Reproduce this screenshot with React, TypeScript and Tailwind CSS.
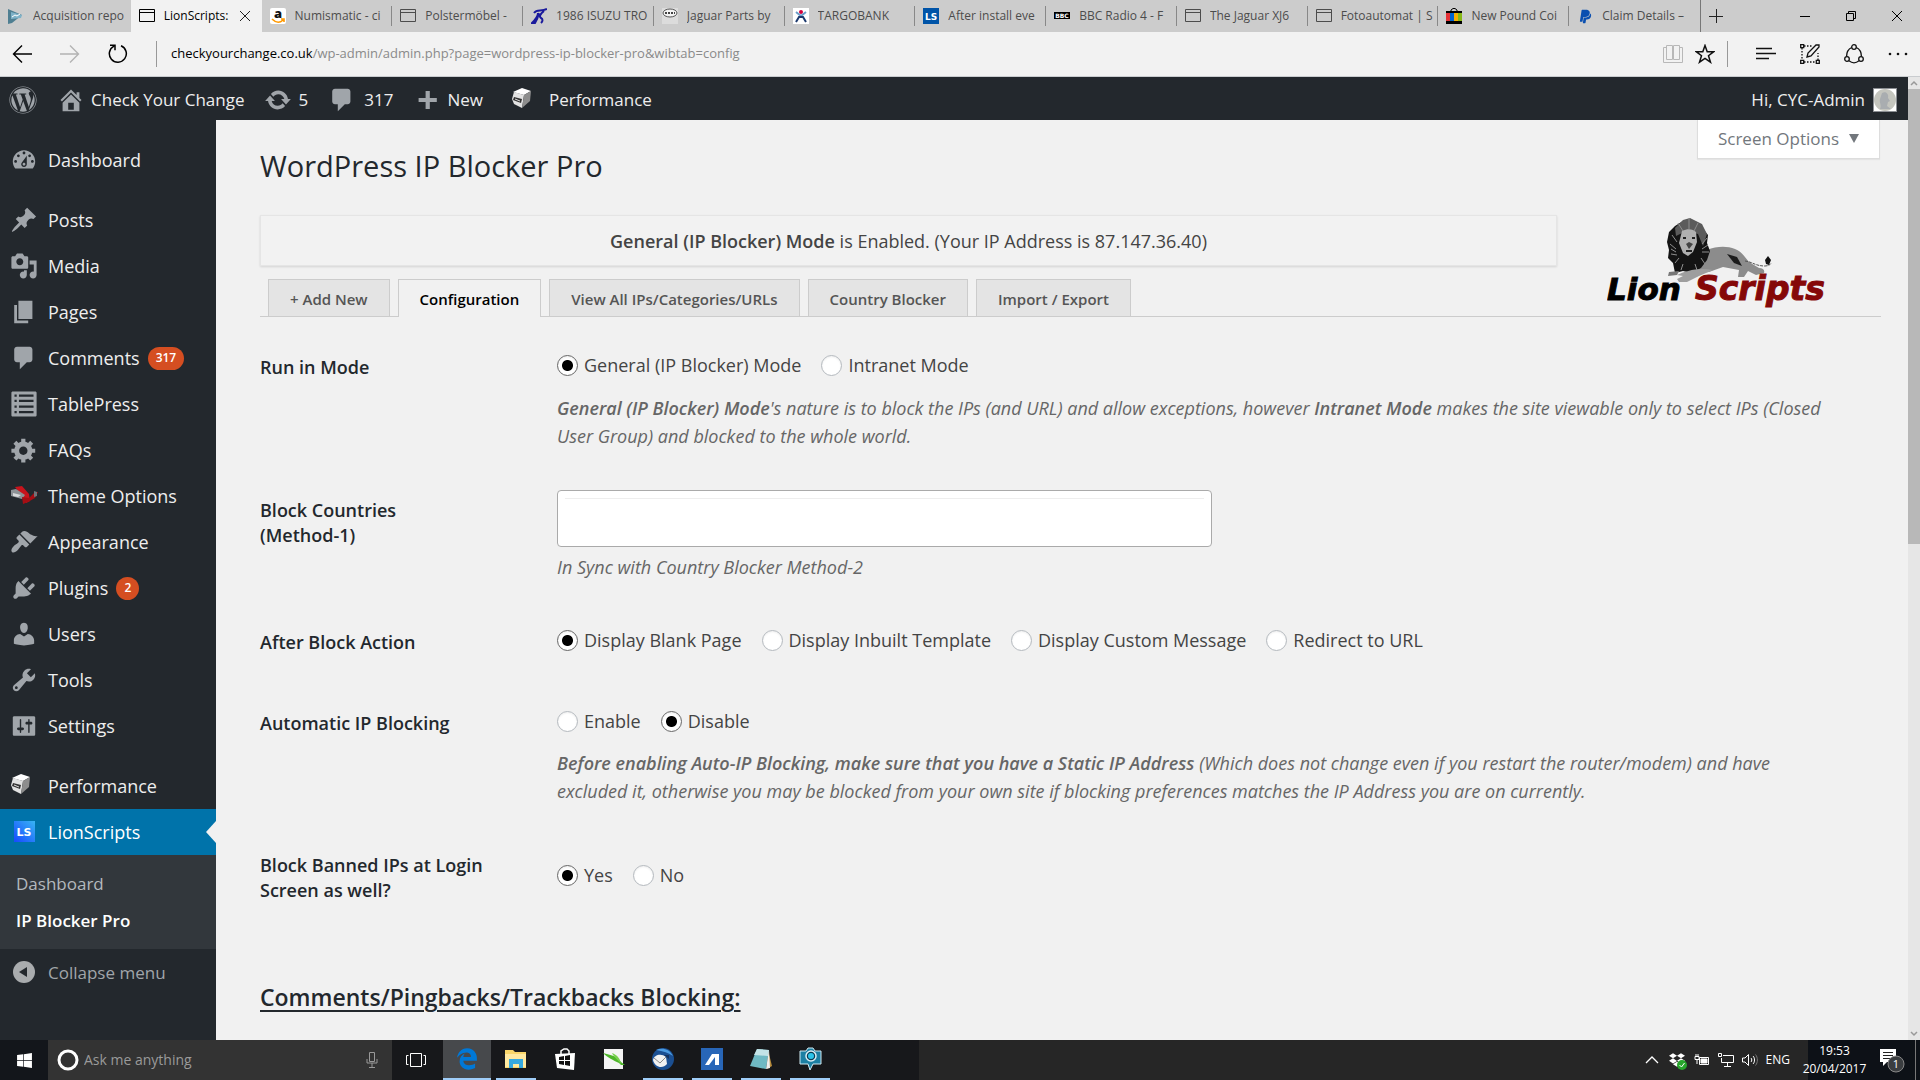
import React from "react";
import { FaWordpress, FaEdgeLegacy, FaWindows, FaPaypal, FaDropbox } from "react-icons/fa";

/* ---------- Icons ---------- */

const glyphs = {
  dashboard:
    "M3.76 16h12.48c1.1-1.37 1.76-3.11 1.76-5 0-4.42-3.58-8-8-8s-8 3.58-8 8c0 1.89.66 3.63 1.76 5zM10 4c.55 0 1 .45 1 1s-.45 1-1 1-1-.45-1-1 .45-1 1-1zM6 6c.55 0 1 .45 1 1s-.45 1-1 1-1-.45-1-1 .45-1 1-1zm8 0c.55 0 1 .45 1 1s-.45 1-1 1-1-.45-1-1 .45-1 1-1zm-5.37 5.55L12 7v6c0 1.1-.9 2-2 2s-2-.9-2-2c0-.57.24-1.08.63-1.45zM4 10c.55 0 1 .45 1 1s-.45 1-1 1-1-.45-1-1 .45-1 1-1zm12 0c.55 0 1 .45 1 1s-.45 1-1 1-1-.45-1-1 .45-1 1-1zm-5 3c0-.55-.45-1-1-1s-1 .45-1 1 .45 1 1 1 1-.45 1-1z",
  post: "M10.44 3.02l1.82-1.82 6.36 6.35-1.83 1.82c-1.05-.68-2.48-.57-3.41.36l-.75.75c-.92.93-1.04 2.35-.35 3.41l-1.83 1.82-2.41-2.41-2.8 2.79c-.42.42-3.38 2.71-3.8 2.29s1.86-3.39 2.28-3.81l2.79-2.79L4.1 9.36l1.83-1.82c1.05.69 2.48.57 3.4-.36l.75-.75c.93-.92 1.05-2.35.36-3.41z",
  media:
    "M13 11V4c0-.55-.45-1-1-1h-1.67L9 1H5L3.67 3H2c-.55 0-1 .45-1 1v7c0 .55.45 1 1 1h10c.55 0 1-.45 1-1zM7 4.5c1.38 0 2.5 1.12 2.5 2.5S8.38 9.5 7 9.5 4.5 8.38 4.5 7 5.62 4.5 7 4.5zM14 6h5v10.5c0 1.38-1.12 2.5-2.5 2.5S14 17.88 14 16.5s1.12-2.5 2.5-2.5c.17 0 .34.02.5.05V9h-3V6zm-4 8.05V13h2v3.5c0 1.38-1.12 2.5-2.5 2.5S7 17.88 7 16.5 8.12 14 9.5 14c.17 0 .34.02.5.05z",
  page: "M6 15V2h10v13H6zm-1 1h8v2H3V5h2v11z",
  comments: "M5 2h9c1.1 0 2 .9 2 2v7c0 1.1-.9 2-2 2h-2l-5 5v-5H5c-1.1 0-2-.9-2-2V4c0-1.1.9-2 2-2z",
  table:
    "M2 1h16c.55 0 1 .45 1 1v16c0 .55-.45 1-1 1H2c-.55 0-1-.45-1-1V2c0-.55.45-1 1-1zm1.2 2.2v1.6h1.6V3.2zm3.2 0v1.6h10.4V3.2zM3.2 7v1.6h1.6V7zm3.2 0v1.6h10.4V7zm-3.2 4v1.6h1.6V11zm3.2 0v1.6h10.4V11zm-3.2 4v1.6h1.6V15zm3.2 0v1.6h10.4V15z",
  generic:
    "M18 12h-2.18c-.17.7-.44 1.35-.81 1.93l1.54 1.54-2.1 2.1-1.54-1.54c-.58.36-1.23.63-1.91.79V19H8v-2.18c-.68-.16-1.33-.43-1.91-.79l-1.54 1.54-2.12-2.12 1.54-1.54c-.36-.58-.63-1.23-.79-1.91H1V9.03h2.17c.16-.7.44-1.35.8-1.94L2.43 5.55l2.1-2.1 1.54 1.54c.58-.37 1.24-.64 1.93-.81V2h3v2.18c.68.16 1.33.43 1.91.79l1.54-1.54 2.12 2.12-1.54 1.54c.36.59.64 1.24.8 1.94H18V12zm-8.5 1.5c1.66 0 3-1.34 3-3s-1.34-3-3-3-3 1.34-3 3 1.34 3 3 3z",
  appearance:
    "M14.48 11.06L7.41 3.99l1.5-1.5c.5-.56 2.3-.47 3.51.32 1.21.8 1.43 1.28 2.91 2.1 1.18.64 2.45 1.26 4.45.85zm-.71.71L6.7 4.7 4.93 6.47c-.39.39-.39 1.02 0 1.41l1.06 1.06c.39.39.39 1.03 0 1.42-.6.6-1.43 1.11-2.21 1.69-.35.26-.7.53-1.01.84C1.43 14.23.4 16.08 1.4 17.07c.99 1 2.84-.03 4.18-1.36.31-.31.58-.66.85-1.02.57-.78 1.08-1.61 1.69-2.21.39-.39 1.02-.39 1.41 0l1.06 1.06c.39.39 1.02.39 1.41 0z",
  plugins:
    "M13.11 4.36L9.87 7.6 8 5.73l3.24-3.24c.35-.34 1.05-.2 1.56.32.52.51.66 1.21.31 1.55zm-8 1.77l.91-1.12 9.01 9.01-1.19.84c-.71.71-2.63 1.16-3.82 1.16H6.14L4.9 17.26c-.59.59-1.54.59-2.12 0-.59-.58-.59-1.53 0-2.12l1.24-1.24v-3.88c0-1.13.4-3.19 1.09-3.89zm7.26 3.97l3.24-3.24c.34-.35 1.04-.21 1.55.31.52.51.66 1.21.31 1.55l-3.24 3.25z",
  users:
    "M10 9.25c-2.27 0-2.73-3.44-2.73-3.44C7 4.02 7.82 2 9.97 2c2.16 0 2.98 2.02 2.71 3.81 0 0-.41 3.44-2.68 3.44zm0 2.57L12.72 10c2.39 0 4.52 2.33 4.52 4.53v2.49s-3.65 1.13-7.24 1.13c-3.65 0-7.24-1.13-7.24-1.13v-2.49c0-2.25 1.94-4.48 4.47-4.48z",
  tools:
    "M16.68 9.77c-1.34 1.34-3.3 1.67-4.95.99l-5.41 6.52c-.99.99-2.59.99-3.58 0s-.99-2.59 0-3.57l6.52-5.42c-.68-1.65-.35-3.61.99-4.95 1.28-1.28 3.12-1.62 4.72-1.06l-2.89 2.89 2.82 2.82 2.86-2.87c.53 1.58.18 3.39-1.08 4.65zM3.81 16.21c.4.39 1.04.39 1.43 0 .4-.4.4-1.04 0-1.43-.39-.4-1.03-.4-1.43 0-.39.39-.39 1.03 0 1.43z",
  settings:
    "M18 16V4c0-.55-.45-1-1-1H3c-.55 0-1 .45-1 1v12c0 .55.45 1 1 1h14c.55 0 1-.45 1-1zM8 11h1c.55 0 1 .45 1 1s-.45 1-1 1H8v1.5c0 .28-.22.5-.5.5s-.5-.22-.5-.5V13H6c-.55 0-1-.45-1-1s.45-1 1-1h1V5.5c0-.28.22-.5.5-.5s.5.22.5.5V11zm5-2h-1c-.55 0-1-.45-1-1s.45-1 1-1h1V5.5c0-.28.22-.5.5-.5s.5.22.5.5V7h1c.55 0 1 .45 1 1s-.45 1-1 1h-1v5.5c0 .28-.22.5-.5.5s-.5-.22-.5-.5V9z",
  home: "M16 8.5l1.53 1.53-1.06 1.06L10 4.6l-6.47 6.49-1.06-1.06L10 2.5l4 4v-2h2v4zm-6-2.46l6 5.99V18H4v-5.97zM12 17v-5H8v5h4z",
  update:
    "M10.2 3.28c3.53 0 6.43 2.61 6.92 6h2.08l-3.5 4-3.5-4h2.32c-.45-1.97-2.21-3.45-4.32-3.45-1.45 0-2.73.71-3.54 1.78L4.95 5.66C6.23 4.2 8.11 3.28 10.2 3.28zm-.4 13.44c-3.52 0-6.43-2.61-6.92-6H.8l3.5-4c1.17 1.33 2.33 2.67 3.5 4H5.48c.45 1.97 2.21 3.45 4.32 3.45 1.45 0 2.73-.71 3.54-1.78l1.71 1.95c-1.28 1.46-3.15 2.38-5.25 2.38z",
  plus: "M17 8.5v3h-5v5H9v-5H4v-3h5v-5h3v5z",
};

type GlyphName = keyof typeof glyphs;

function Glyph({ name }: { name: GlyphName }) {
  return (
    <svg viewBox="0 0 20 20" className="size-7 shrink-0" fill="currentColor" fillRule="evenodd" aria-hidden="true">
      <path d={glyphs[name]} />
    </svg>
  );
}

function CubeIcon() {
  return (
    <svg viewBox="0 0 28 28" className="size-7 shrink-0" aria-hidden="true">
      <path d="M2 6 11 2l9 3-7 4z" fill="#fff" />
      <path d="M3 6l10 3-2 13-8-4-2-5z" fill="#e2e2e2" />
      <path d="M13 9l7-4-1 10-8 7z" fill="#8d8d8d" />
      <path d="M3 11l8 2-1 4-8-3z" fill="#333" />
      <path d="M4 13l5 2" stroke="#ddd" />
    </svg>
  );
}

function PlaneIcon() {
  return (
    <svg viewBox="0 0 28 28" className="size-7 shrink-0" aria-hidden="true">
      <path d="M5 5l7-1 7 8 1 7-4 2-5-8z" fill="#c8141c" />
      <path d="M1 8l5-1 9 6-3 4-11-3z" fill="#8d9296" />
      <path d="M12 15l7 1 6-6h3l-3 6-7 4-5 2z" fill="#a50e14" />
      <path d="M3 11l8 2-3 2-5-1z" fill="#d8dadb" />
      <path d="M24 9l3 1v4l-3 1z" fill="#6f7478" />
    </svg>
  );
}

function LsIcon() {
  return (
    <svg viewBox="0 0 28 28" className="size-7 shrink-0" aria-hidden="true">
      <defs>
        <linearGradient id="ls" x1="0" y1="1" x2="1" y2="0">
          <stop offset="0" stopColor="#1648ff" />
          <stop offset="1" stopColor="#38b4f4" />
        </linearGradient>
      </defs>
      <rect x="4" y="3" width="21" height="21" fill="url(#ls)" />
      <text x="14" y="18" textAnchor="middle" fontFamily="DejaVu Sans" fontWeight="700" fontSize="11" fill="#fff">
        LS
      </text>
    </svg>
  );
}

function PageFavicon() {
  return (
    <svg viewBox="0 0 16 16" className="size-4 shrink-0" fill="none" stroke="currentColor" aria-hidden="true">
      <path d="M.5 1.5h15v12H.5zM.5 4.5h15" />
    </svg>
  );
}

function ChartFavicon() {
  return (
    <svg viewBox="0 0 16 16" className="size-4 shrink-0" aria-hidden="true">
      <path d="M0 1l14 6-10 8-4 1z" fill="#4f7f92" />
      <path d="M3 4l11 3-1 3-10 1z" fill="#7fb2c8" />
      <path d="M4 9l3-2 2 1 3-2" stroke="#fff" fill="none" />
    </svg>
  );
}

function AmazonFavicon() {
  return (
    <svg viewBox="0 0 16 16" className="size-4 shrink-0" aria-hidden="true">
      <rect width="16" height="16" rx="2" fill="#fff" />
      <text x="8" y="10" textAnchor="middle" fontFamily="Open Sans" fontWeight="800" fontSize="13" fill="#111">
        a
      </text>
      <path d="M2 11c4 4 8 4 11 1M11 11h3v3" fill="none" stroke="#f90" strokeWidth="1.600" />
    </svg>
  );
}

function IsuzuFavicon() {
  return (
    <svg viewBox="0 0 16 16" className="size-4 shrink-0" fill="none" stroke="#1a1a9c" strokeWidth="2" aria-hidden="true">
      <path d="M3 5c3-4 7-1 13-4M7 5c0 4-3 7-6 10h3c2-3 3-6 4-10M13 3c-4 3-5 6-3 7s2 3 0 5" />
    </svg>
  );
}

function JaguarFavicon() {
  return (
    <svg viewBox="0 0 16 16" className="size-4 shrink-0" aria-hidden="true">
      <path d="M0 0h16v16H0z" fill="#dcdcdc" />
      <ellipse cx="8" cy="5" rx="7" ry="4" fill="#f4f4f4" stroke="#555" />
      <path d="M3 5h10" stroke="#444" strokeWidth="2" strokeDasharray="2 1" />
    </svg>
  );
}

function TargoFavicon() {
  return (
    <svg viewBox="0 0 16 16" className="size-4 shrink-0" aria-hidden="true">
      <path d="M0 0h16v16H0z" fill="#fff" />
      <circle cx="8" cy="4" r="2" fill="#d4003c" />
      <path d="M3 4l5 4 5-4" fill="none" stroke="#6b9cc8" strokeWidth="2" />
      <path d="M3 14l3-5h4l3 5" fill="none" stroke="#1d3a6e" strokeWidth="2" />
    </svg>
  );
}

function SquareLsFavicon() {
  return (
    <svg viewBox="0 0 16 16" className="size-4 shrink-0" aria-hidden="true">
      <path d="M0 0h16v16H0z" fill="#0054a8" />
      <text x="8" y="12" textAnchor="middle" fontFamily="DejaVu Sans" fontWeight="700" fontSize="9" fill="#fff">
        LS
      </text>
    </svg>
  );
}

function BbcFavicon() {
  return (
    <svg viewBox="0 0 16 16" className="size-4 shrink-0" aria-hidden="true">
      <path d="M0 4h16v7H0z" fill="#000" />
      <text x="8" y="10" textAnchor="middle" fontFamily="DejaVu Sans" fontWeight="700" fontSize="6" fill="#fff">
        BBC
      </text>
    </svg>
  );
}

function BagFavicon() {
  return (
    <svg viewBox="0 0 16 16" className="size-4 shrink-0" aria-hidden="true">
      <path d="M5 4V2l2-1.500h2L11 2v2" fill="none" stroke="#000" />
      <path d="M0 3h16v2H0zM0 13h16v3H0z" fill="#000" />
      <path d="M0 5h4v8H0z" fill="#e53238" />
      <path d="M4 5h4v8H4z" fill="#0064d2" />
      <path d="M8 5h4v8H8z" fill="#f5af02" />
      <path d="M12 5h4v8h-4z" fill="#86b817" />
    </svg>
  );
}

function PaypalFavicon() {
  return (
    <span className="grid size-4 shrink-0 place-items-center text-[#0a4fb0]">
      <FaPaypal size={15} />
    </span>
  );
}

/* ---------- Browser chrome ---------- */

type BrowserTab = { title: string; icon: () => React.ReactElement; active?: boolean };

const browserTabs: BrowserTab[] = [
  { title: "Acquisition repo", icon: ChartFavicon },
  { title: "LionScripts:", icon: PageFavicon, active: true },
  { title: "Numismatic - ci", icon: AmazonFavicon },
  { title: "Polstermöbel -", icon: PageFavicon },
  { title: "1986 ISUZU TRO", icon: IsuzuFavicon },
  { title: "Jaguar Parts by", icon: JaguarFavicon },
  { title: "TARGOBANK", icon: TargoFavicon },
  { title: "After install eve", icon: SquareLsFavicon },
  { title: "BBC Radio 4 - F", icon: BbcFavicon },
  { title: "The Jaguar XJ6", icon: PageFavicon },
  { title: "Fotoautomat | S", icon: PageFavicon },
  { title: "New Pound Coi", icon: BagFavicon },
  { title: "Claim Details –", icon: PaypalFavicon },
];

function TabStrip() {
  return (
    <div className="flex h-8 shrink-0 items-stretch bg-[#cccccc] text-xs text-[#4c4c4c]">
      <div className="flex min-w-0 flex-[0_1_1701px] border-r border-[#777]" role="tablist" aria-label="Browser tabs">
        {browserTabs.map((tab, i) => {
          const Icon = tab.icon;
          const divider = i > 1 && i < browserTabs.length - 1;
          return (
            <div
              key={tab.title}
              role="tab"
              aria-selected={!!tab.active}
              className={
                tab.active
                  ? "flex min-w-0 flex-1 items-center bg-[#f2f2f2] pl-2 text-black"
                  : "flex min-w-0 flex-1 items-center pl-2"
              }
            >
              <Icon />
              <span className="ml-[9px] min-w-0 flex-1 overflow-hidden whitespace-nowrap">{tab.title}</span>
              {tab.active && (
                <button type="button" aria-label="Close tab" className="mr-2 shrink-0">
                  <svg viewBox="0 0 12 12" className="size-3" stroke="#222" aria-hidden="true">
                    <path d="M1 1l10 10M11 1L1 11" />
                  </svg>
                </button>
              )}
              <span className={divider ? "ml-0.5 h-5 w-px shrink-0 bg-[#888]" : "ml-0.5 h-5 w-px shrink-0"} />
            </div>
          );
        })}
      </div>
      <button type="button" aria-label="New tab" className="px-2">
        <svg viewBox="0 0 14 14" className="size-3.5" stroke="#222" aria-hidden="true">
          <path d="M7.500 0v14M0 7.500h14" />
        </svg>
      </button>
      <div className="ml-auto flex">
        <button type="button" aria-label="Minimise" className="w-[46px]">
          <svg viewBox="0 0 12 12" className="mx-auto size-3" stroke="#000" aria-hidden="true">
            <path d="M1 6.500h10" />
          </svg>
        </button>
        <button type="button" aria-label="Restore" className="w-[46px]">
          <svg viewBox="0 0 12 12" className="mx-auto size-3" stroke="#000" fill="none" aria-hidden="true">
            <path d="M1.500 3.500h7v7h-7zM3.500 3.500v-2h7v7h-2" />
          </svg>
        </button>
        <button type="button" aria-label="Close window" className="w-[46px]">
          <svg viewBox="0 0 12 12" className="mx-auto size-3" stroke="#000" aria-hidden="true">
            <path d="M1 1l10 10M11 1L1 11" />
          </svg>
        </button>
      </div>
    </div>
  );
}

function AddressBar() {
  return (
    <div className="flex h-[45px] shrink-0 items-center border-b border-[#c9cccf] bg-[#f2f2f2] text-[13px]">
      <div className="flex items-center gap-7 pl-3">
        <button type="button" aria-label="Back">
          <svg viewBox="0 0 20 20" className="size-5" fill="none" stroke="#000" strokeWidth="1.400" aria-hidden="true">
            <path d="M20 10H1.500M10 1.500L1.500 10l8.500 8.500" />
          </svg>
        </button>
        <button type="button" aria-label="Forward">
          <svg viewBox="0 0 20 20" className="size-5" fill="none" stroke="#b3b3b3" strokeWidth="1.400" aria-hidden="true">
            <path d="M0 10h18.500M10 1.500l8.500 8.500-8.500 8.500" />
          </svg>
        </button>
        <button type="button" aria-label="Refresh">
          <svg viewBox="0 0 20 20" className="size-5" fill="none" stroke="#000" strokeWidth="1.500" aria-hidden="true">
            <path d="M13 1.800a8.500 8.500 0 1 1-7 .3M2 1.200h5v5" />
          </svg>
        </button>
      </div>
      <span className="ml-7 h-[26px] w-px bg-[#999]" />
      <span className="ml-3.5 text-[#8a8a8a]">
        <span className="text-black">checkyourchange.co.uk</span>/wp-admin/admin.php?page=wordpress-ip-blocker-pro&amp;wibtab=config
      </span>
      <div className="ml-auto flex items-center pr-3">
        <button type="button" aria-label="Reading view" className="mr-3">
          <svg viewBox="0 0 20 20" className="size-5" fill="none" stroke="#b8b8b8" aria-hidden="true">
            <path d="M3.500 1.500h6v14h-6zM10.500 1.500h6v14h-6zM3 3.500H.5v15h19v-15H17" />
          </svg>
        </button>
        <button type="button" aria-label="Add to favourites">
          <svg viewBox="0 0 20 20" className="size-5" fill="none" stroke="#111" strokeWidth="1.500" aria-hidden="true">
            <path d="M10 1.500l2.200 6.200h6.600l-5.300 4 2 6.500L10 14.300l-5.500 3.900 2-6.500-5.300-4h6.600z" />
          </svg>
        </button>
        <span className="ml-3 mr-7 h-[26px] w-px bg-[#999]" />
        <div className="flex items-center gap-6">
          <button type="button" aria-label="Hub">
            <svg viewBox="0 0 20 20" className="size-5" stroke="#111" strokeWidth="1.300" aria-hidden="true">
              <path d="M0 4.500h16M0 9.500h20M0 14.500h13" />
            </svg>
          </button>
          <button type="button" aria-label="Make a web note">
            <svg viewBox="0 0 20 20" className="size-5" fill="none" stroke="#111" strokeWidth="1.300" aria-hidden="true">
              <path d="M2 4v12M4 18h12M18 16V9M4 2h8" strokeDasharray="1.500 1.500" />
              <path d="M.7.700h3v3h-3zM.7 16.300h3v3h-3zM16.300 16.300h3v3h-3z" />
              <path d="M7 13l1-4 8-8h3v2l-8 9z" />
            </svg>
          </button>
          <button type="button" aria-label="Share">
            <svg viewBox="0 0 20 20" className="size-5" fill="none" stroke="#111" strokeWidth="1.300" aria-hidden="true">
              <circle cx="10" cy="3" r="2.300" />
              <circle cx="3" cy="15" r="2.300" />
              <circle cx="17" cy="15" r="2.300" />
              <path d="M7.700 3.500C4.500 5 2.500 8 2.600 12.500M12.300 3.500c3.200 1.500 5.200 4.500 5.100 9M5 16.800c3 2.400 7 2.400 10 0" />
            </svg>
          </button>
          <button type="button" aria-label="More">
            <svg viewBox="0 0 20 20" className="size-5" fill="#111" aria-hidden="true">
              <circle cx="2" cy="10" r="1.300" />
              <circle cx="10" cy="10" r="1.300" />
              <circle cx="18" cy="10" r="1.300" />
            </svg>
          </button>
        </div>
      </div>
    </div>
  );
}

/* ---------- WordPress admin ---------- */

function AdminBar() {
  return (
    <header className="flex h-[43px] shrink-0 items-center bg-[#23282d] pt-0.5 pl-[9px] pr-[11px] text-[17px] text-[#eee]">
      <a href="#wp" aria-label="About WordPress" className="text-[#a0a5aa]">
        <FaWordpress size={28} />
      </a>
      <a href="#site" className="ml-5 flex items-center gap-1.5">
        <span className="text-[#a0a5aa]"><Glyph name="home" /></span>Check Your Change
      </a>
      <a href="#updates" className="ml-5 flex items-center gap-1.5">
        <span className="text-[#a0a5aa]"><Glyph name="update" /></span>5
      </a>
      <a href="#comments" className="ml-5 flex items-center gap-2">
        <span className="text-[#a0a5aa]"><Glyph name="comments" /></span>317
      </a>
      <a href="#new" className="ml-5 flex items-center gap-1.5">
        <span className="text-[#a0a5aa]"><Glyph name="plus" /></span>New
      </a>
      <a href="#performance" className="ml-7 flex items-center gap-2.5">
        <CubeIcon />Performance
      </a>
      <a href="#profile" className="ml-auto flex items-center gap-2">
        Hi, CYC-Admin
        <svg viewBox="0 0 24 24" className="size-6" aria-hidden="true">
          <path d="M0 0h24v24H0z" fill="#8c8f94" />
          <path d="M1 1h22v22H1z" fill="#fff" />
          <circle cx="12" cy="12" r="11" fill="#c4c5be" />
          <path d="M9 5c4-2 7 1 6 5l2 3-2 1-1 4 4 3H7c2-4-1-6 0-10z" fill="#a9adb0" />
        </svg>
      </a>
    </header>
  );
}

function MenuItem({ icon, label, badge }: { icon: React.ReactNode; label: string; badge?: string }) {
  return (
    <li>
      <a href={"#" + label} className="flex h-[46px] items-center gap-2.5 pl-2.5">
        <span className="text-[#a0a5aa]">{icon}</span>
        {label}
        {badge && (
          <span className="-ml-0.5 flex h-[23px] min-w-[23px] items-center justify-center rounded-full bg-[#d54e21] px-2 text-xs font-semibold text-white">
            {badge}
          </span>
        )}
      </a>
    </li>
  );
}

function Sidebar() {
  return (
    <nav aria-label="Admin menu" className="w-[216px] shrink-0 bg-[#23282d] pt-[17px] text-lg text-[#eee]">
      <ul>
        <MenuItem icon={<Glyph name="dashboard" />} label="Dashboard" />
      </ul>
      <ul className="mt-3.5">
        <MenuItem icon={<Glyph name="post" />} label="Posts" />
        <MenuItem icon={<Glyph name="media" />} label="Media" />
        <MenuItem icon={<Glyph name="page" />} label="Pages" />
        <MenuItem icon={<Glyph name="comments" />} label="Comments" badge="317" />
        <MenuItem icon={<Glyph name="table" />} label="TablePress" />
        <MenuItem icon={<Glyph name="generic" />} label="FAQs" />
        <MenuItem icon={<PlaneIcon />} label="Theme Options" />
        <MenuItem icon={<Glyph name="appearance" />} label="Appearance" />
        <MenuItem icon={<Glyph name="plugins" />} label="Plugins" badge="2" />
        <MenuItem icon={<Glyph name="users" />} label="Users" />
        <MenuItem icon={<Glyph name="tools" />} label="Tools" />
        <MenuItem icon={<Glyph name="settings" />} label="Settings" />
      </ul>
      <ul className="mt-3.5">
        <MenuItem icon={<CubeIcon />} label="Performance" />
        <li>
          <a href="#lionscripts" className="flex h-[46px] items-center gap-2.5 bg-[#0073aa] pl-2.5 text-white">
            <LsIcon />
            LionScripts
            <svg viewBox="0 0 10 22" className="ml-auto h-[22px] w-2.5" fill="#f1f1f1" aria-hidden="true">
              <path d="M10 0v22L0 11z" />
            </svg>
          </a>
          <ul className="bg-[#32373c] py-2.5 text-[17px]">
            <li><a href="#ls-dashboard" className="block pl-4 leading-[37px] text-[#b4b9be]">Dashboard</a></li>
            <li><a href="#ip-blocker" className="block pl-4 leading-[37px] font-semibold text-white">IP Blocker Pro</a></li>
          </ul>
        </li>
      </ul>
      <button type="button" className="flex h-[48px] items-center gap-2.5 pl-2.5 text-[17px] text-[#a0a5aa]">
        <svg viewBox="0 0 28 28" className="size-7" aria-hidden="true">
          <circle cx="14" cy="13" r="11" fill="#a9acae" />
          <path d="M17 8v10l-8-5z" fill="#23282d" />
        </svg>
        Collapse menu
      </button>
    </nav>
  );
}

function LionLogo() {
  return (
    <svg viewBox="0 0 226 92" className="h-[92px] w-[226px]" role="img" aria-label="Lion Scripts">
      <path d="M100 32c10-4 20-4 28-1 6 2 9 7 14 13l10 6c4 0 6 2 5 5l-8 2-8-4-4 6h-6l1-7-16-3-14 5-16 1z" fill="#8c8c8c" />
      <path d="M120 36l10 3 5 9-8-3z" fill="#1b1b1b" />
      <path d="M138 43c8 1 10 5 20 5 4 0 6-2 6-3" fill="none" stroke="#555" strokeDasharray="3 1" />
      <path d="M159 46l-1-4 3-4 3 4-2 5z" fill="#111" />
      <path d="M68 8l8-5 7 0 8 2 5 6 5 6-1 8 3 8-3 9-6 8-10 5-8-2-8 2-2-10-5-5 1-8-2-8 2-10z" fill="#141414" />
      <path d="M76 2l7-2 12 6 5 10-4 12-5-12-12-3-10 5-1-8z" fill="#5b5b5b" />
      <path d="M71 5l5 8M82 0v11M91 5l-4 8M65 17l5 7M63 26l6 5M64 36l6 1M68 45l4-5M100 20l-5 6M102 34h-7M98 46l-4-6M64 31l5 3M101 27l-6 4M74 52l2-6M90 52l-2-6" stroke="#8e8e8e" />
      <path d="M75 13c6-3 11-2 14 1l1 10-4 10-5 4-5-3-4-10z" fill="#b0b0b0" />
      <path d="M79 26l3 5 4-5-4-2z" fill="#444" />
      <path d="M76 20h3M85 20h3M79 33h6" stroke="#222" strokeWidth="2" />
      <path d="M70 57c8-4 22-8 36-5l-14 6-12 6h-8l-2-3 6-3z" fill="#9e9e9e" />
      <path d="M62 54l10-1-2 4-9 1z" fill="#777" />
      <text x="0" y="82" fontFamily="DejaVu Sans" fontWeight="700" fontStyle="italic" fontSize="31" stroke="#000" fill="#000">
        Lion
      </text>
      <text x="88" y="82" fontFamily="DejaVu Sans" fontWeight="700" fontStyle="italic" fontSize="33" stroke="#850808" fill="#850808">
        Scripts
      </text>
    </svg>
  );
}

const pluginTabs = [
  { label: "+ Add New" },
  { label: "Configuration", active: true },
  { label: "View All IPs/Categories/URLs" },
  { label: "Country Blocker" },
  { label: "Import / Export" },
];

function RadioGroup({ name, options, selected }: { name: string; options: string[]; selected: string }) {
  return (
    <div role="radiogroup" aria-label={name} className="flex h-7 items-center gap-5 text-[#444]">
      {options.map((option) => (
        <label key={option} className="flex items-center gap-1.5">
          <input
            type="radio"
            name={name}
            defaultChecked={option === selected}
            className="size-[21px] appearance-none rounded-full border border-[#b4b9be] bg-white shadow-[inset_0_1px_2px_rgba(0,0,0,0.07)] checked:border-[#666] checked:bg-[radial-gradient(circle,#000_5px,#fff_6px)]"
          />
          {option}
        </label>
      ))}
    </div>
  );
}

function Row({ label, top, children }: { label: React.ReactNode; top?: boolean; children: React.ReactNode }) {
  return (
    <div className="flex">
      <div
        className={
          top
            ? "w-[297px] shrink-0 text-lg leading-[25px] font-semibold text-[#23282d]"
            : "w-[297px] shrink-0 pt-1 text-lg leading-[25px] font-semibold text-[#23282d]"
        }
      >
        {label}
      </div>
      <div className="min-w-0 flex-1">{children}</div>
    </div>
  );
}

function Content() {
  return (
    <main className="relative min-w-0 flex-1 overflow-hidden bg-[#f1f1f1] pr-[27px] pl-11 text-lg text-[#444]">
      <button
        type="button"
        className="absolute top-0 right-7 flex h-[39px] items-center gap-2.5 border border-t-0 border-[#ddd] bg-white px-5 text-[17px] text-[#72777c] shadow-[0_1px_1px_rgba(0,0,0,0.05)]"
      >
        Screen Options
        <svg viewBox="0 0 10 10" className="size-2.5" fill="#72777c" aria-hidden="true">
          <path d="M0 0h10L5 9z" />
        </svg>
      </button>

      <h1 className="pt-6 text-[29px] leading-[44px] text-[#23282d]">WordPress IP Blocker Pro</h1>

      <div className="flex items-start pt-[27px]">
        <p className="mr-[50px] h-[51px] flex-1 border border-[#e5e5e5] bg-[#f2f2f2] text-center leading-[50px] shadow-[0_1px_2px_rgba(0,0,0,0.12)]">
          <strong className="font-semibold">General (IP Blocker) Mode</strong> is Enabled. (Your IP Address is 87.147.36.40)
        </p>
        <div className="h-16 w-[274px] shrink-0 pt-[3px]">
          <LionLogo />
        </div>
      </div>

      <nav aria-label="Plugin sections" className="flex h-[38px] items-end gap-2 border-b border-[#ccc] px-2 text-[15px] font-semibold">
        {pluginTabs.map((tab) => (
          <a
            key={tab.label}
            href={"#" + tab.label}
            aria-current={tab.active ? "page" : undefined}
            className={
              tab.active
                ? "-mb-px h-[38px] border border-b-0 border-[#ccc] bg-[#f1f1f1] px-[21px] leading-[38px] text-black"
                : "h-[37px] border border-b-0 border-[#ccc] bg-[#e4e4e4] px-[21px] leading-[38px] text-[#555]"
            }
          >
            {tab.label}
          </a>
        ))}
      </nav>

      <form className="pt-[34px]">
        <Row label="Run in Mode">
          <RadioGroup name="Run in Mode" options={["General (IP Blocker) Mode", "Intranet Mode"]} selected="General (IP Blocker) Mode" />
          <p className="mt-[15px] pr-12 leading-7 text-[#666] italic">
            <strong className="font-semibold">General (IP Blocker) Mode</strong>'s nature is to block the IPs (and URL) and allow exceptions, however{" "}
            <strong className="font-semibold">Intranet Mode</strong> makes the site viewable only to select IPs (Closed User Group) and blocked to the whole world.
          </p>
        </Row>
        <div className="pt-10">
          <Row label={<label htmlFor="countries" className="block pt-1">Block Countries<br />(Method-1)</label>}>
            <div className="flex h-[57px] max-w-[655px] items-start rounded border border-[#aaa] bg-white p-[7px]">
              <input id="countries" type="text" className="h-9 w-full border-t border-[#eee] bg-white" />
            </div>
            <p className="mt-1.5 leading-7 text-[#666] italic">In Sync with Country Blocker Method-2</p>
          </Row>
        </div>
        <div className="pt-[45px]">
          <Row label="After Block Action">
            <RadioGroup
              name="After Block Action"
              options={["Display Blank Page", "Display Inbuilt Template", "Display Custom Message", "Redirect to URL"]}
              selected="Display Blank Page"
            />
          </Row>
        </div>
        <div className="pt-[52px]">
          <Row label="Automatic IP Blocking">
            <RadioGroup name="Automatic IP Blocking" options={["Enable", "Disable"]} selected="Disable" />
            <p className="mt-3.5 pr-12 leading-7 text-[#666] italic">
              <strong className="font-semibold">Before enabling Auto-IP Blocking, make sure that you have a Static IP Address</strong> (Which does not change even if you restart the
              router/modem) and have excluded it, otherwise you may be blocked from your own site if blocking preferences matches the IP Address you are on currently.
            </p>
          </Row>
        </div>
        <div className="pt-12">
          <Row top label={<>Block Banned IPs at Login<br />Screen as well?</>}>
            <div className="pt-2">
              <RadioGroup name="Block Banned IPs at Login Screen as well?" options={["Yes", "No"]} selected="Yes" />
            </div>
          </Row>
        </div>
        <h2 className="pt-[78px] text-[23px] leading-8 font-semibold text-[#23282d] underline decoration-2 underline-offset-4">
          Comments/Pingbacks/Trackbacks Blocking:
        </h2>
      </form>
    </main>
  );
}

function Scrollbar() {
  return (
    <div className="flex w-3 shrink-0 flex-col items-center bg-[#e6e6e6]" aria-hidden="true">
      <svg viewBox="0 0 12 12" className="size-3 shrink-0" fill="none" stroke="#999" strokeWidth="1.500">
        <path d="M3 8l3-3 3 3" />
      </svg>
      <div className="h-[455px] w-3 bg-[#b8b8b8]" />
      <svg viewBox="0 0 12 12" className="mt-auto size-3 shrink-0" fill="none" stroke="#999" strokeWidth="1.500">
        <path d="M3 4l3 3 3-3" />
      </svg>
    </div>
  );
}

/* ---------- Taskbar ---------- */

function ExplorerIcon() {
  return (
    <svg viewBox="0 0 22 22" className="size-[22px]" aria-hidden="true">
      <path d="M0 2h8l2 2h11v16H0z" fill="#f9d66a" />
      <path d="M0 6h21v13H0z" fill="#ffe9a0" />
      <path d="M4 11h14v9h-4v-4H8v4H4z" fill="#35a9e0" />
    </svg>
  );
}

function StoreIcon() {
  return (
    <svg viewBox="0 0 22 22" className="size-[22px]" aria-hidden="true">
      <path d="M7 6V3l3-2h3l2 2v3" fill="none" stroke="#fff" strokeWidth="1.500" />
      <path d="M1 6l20-1-1 17-17-2z" fill="#fff" />
      <path d="M5 9l5-1v4H5zM11 8l5-1v5h-5zM5 13h5v4l-5-1zM11 13h5v5l-5-1z" fill="#111" />
    </svg>
  );
}

function LeafIcon() {
  return (
    <svg viewBox="0 0 22 22" className="size-[22px]" aria-hidden="true">
      <path d="M1 1h19v20H1z" fill="#f4f4f4" />
      <path d="M0 5c8 2 14 3 18 9l4 3-4 0-2-2C10 12 5 10 0 5z" fill="#4db52a" />
      <path d="M9 5c5 2 8 5 9 11-4-5-7-7-9-11z" fill="#79d14f" />
    </svg>
  );
}

function ThunderbirdIcon() {
  return (
    <svg viewBox="0 0 24 24" className="size-6" aria-hidden="true">
      <circle cx="12" cy="12" r="11" fill="#1b4f92" />
      <path d="M5 3c6-3 14-1 17 6-4-3-10-5-17-6z" fill="#4b9ae0" />
      <path d="M2 13c1-5 8-7 13-3l1 7c-4 5-12 4-14-4z" fill="#f1f1f1" />
      <path d="M3 11l6 5 6-6" fill="none" stroke="#888" />
      <path d="M13 8h5v4z" fill="#16335e" />
    </svg>
  );
}

function AIcon() {
  return (
    <svg viewBox="0 0 22 22" className="size-[22px]" aria-hidden="true">
      <path d="M0 0h22v22H0z" fill="#2866b8" />
      <path d="M4 17l7-11h7v11h-4V9l-6 8z" fill="#fff" />
    </svg>
  );
}

function NotepadIcon() {
  return (
    <svg viewBox="0 0 24 24" className="size-6" aria-hidden="true">
      <path d="M19 3l4 16-5 3z" fill="#b98d3e" />
      <path d="M8 2l12 1-3 19-16-3z" fill="#6fb9c4" />
      <path d="M8 2l12 1-1 6-14-1z" fill="#c3e3e7" />
      <path d="M17 22L20 3l1 18z" fill="#eee" />
    </svg>
  );
}

function CameraIcon() {
  return (
    <svg viewBox="0 0 24 24" className="size-6" aria-hidden="true">
      <path d="M2 4h6l2-3h5l2 3h6v13h-8l-3 6-2-6H2z" fill="#1c7fa3" stroke="#cfe9f2" />
      <circle cx="13" cy="9" r="5" fill="#093a52" stroke="#d9eef5" strokeWidth="1.500" />
      <circle cx="13" cy="9" r="3" fill="#2bc4ea" />
    </svg>
  );
}

const taskApps = [
  { name: "Microsoft Edge", icon: <span className="text-[#0078d7]"><FaEdgeLegacy size={22} /></span>, open: true, focused: true },
  { name: "File Explorer", icon: <ExplorerIcon />, open: true },
  { name: "Store", icon: <StoreIcon /> },
  { name: "Green leaf app", icon: <LeafIcon /> },
  { name: "Thunderbird", icon: <ThunderbirdIcon />, open: true },
  { name: "ASUS app", icon: <AIcon />, open: true },
  { name: "Notepad", icon: <NotepadIcon />, open: true },
  { name: "Screenshot tool", icon: <CameraIcon />, open: true },
];

function Taskbar() {
  return (
    <footer className="flex h-10 shrink-0 items-stretch bg-[#17181b] text-white">
      <button type="button" aria-label="Start" className="grid w-12 place-items-center bg-[#13161b]">
        <FaWindows size={17} />
      </button>
      <label className="flex w-[344px] items-center bg-[#333] pr-3.5 pl-[9px]">
        <svg viewBox="0 0 22 22" className="size-[22px]" fill="none" stroke="#fff" strokeWidth="3" aria-hidden="true">
          <circle cx="11" cy="11" r="9" />
        </svg>
        <input
          type="text"
          aria-label="Search"
          placeholder="Ask me anything"
          className="ml-[5px] min-w-0 flex-1 bg-transparent text-sm placeholder:text-[#9a9a9a]"
        />
        <svg viewBox="0 0 12 18" className="h-[18px] w-3" fill="none" stroke="#999" aria-hidden="true">
          <path d="M3.500 1.500h5v9h-5zM1 8v4h10V8M6 12v4M3 16.500h6" />
        </svg>
      </label>
      <button type="button" aria-label="Task view" className="grid w-[51px] place-items-center pr-1">
        <svg viewBox="0 0 20 14" className="h-3.5 w-5" fill="none" stroke="#fff" aria-hidden="true">
          <path d="M4.500.5h11v13h-11zM2.500 2.500h-2v9h2M17.500 2.500h2v9h-2" />
        </svg>
      </button>
      <div className="flex gap-px">
        {taskApps.map((app) => (
          <button
            key={app.name}
            type="button"
            aria-label={app.name}
            className={app.focused ? "flex w-12 flex-col items-center bg-[#47494c]" : "flex w-12 flex-col items-center"}
          >
            <span className="grid flex-1 place-items-center">{app.icon}</span>
            <span className={app.focused ? "h-0.5 w-12 bg-[#9fcdf8]" : app.open ? "h-0.5 w-10 bg-[#9fcdf8]" : "h-0.5 w-10"} />
          </button>
        ))}
      </div>
      <div className="ml-[85px] flex flex-1 items-center justify-end bg-[#262626] text-xs">
        <div className="flex items-center gap-2 pr-[18px]">
          <svg viewBox="0 0 14 14" className="size-3.5" fill="none" stroke="#fff" strokeWidth="1.300" aria-hidden="true">
            <path d="M1 10l6-6 6 6" />
          </svg>
          <span className="relative mr-px ml-0.5">
            <FaDropbox size={16} />
            <svg viewBox="0 0 10 10" className="absolute top-2 left-2 size-2.5" aria-hidden="true">
              <circle cx="5" cy="5" r="5" fill="#27a52c" />
              <path d="M2.500 5l2 2 3-4" fill="none" stroke="#fff" />
            </svg>
          </span>
          <svg viewBox="0 0 16 14" className="h-3.5 w-4" fill="none" stroke="#fff" aria-hidden="true">
            <path d="M5.500 4.500h9v7h-9zM1 3.500h4v3H1zM3 6v5M2 1v2M4 1v2" />
            <path d="M7 6h6v4H7z" fill="#fff" />
          </svg>
          <svg viewBox="0 0 16 14" className="h-3.5 w-4" fill="none" stroke="#fff" aria-hidden="true">
            <path d="M5 2.500h10.500v7H3.500V5M9.500 10v3M6 13.500h7M.5.500h3v3h-3z" />
          </svg>
          <svg viewBox="0 0 16 14" className="h-3.5 w-4" fill="none" stroke="#fff" aria-hidden="true">
            <path d="M.5 5h2.500l3.500-3.500v11L3 9H.500zM9 5c1 1 1 3 0 4M11 3c2 2 2 6 0 8" />
            <path d="M13.500 1.500c2.500 3 2.500 8 0 11" stroke="#777" />
          </svg>
          <span>ENG</span>
        </div>
        <div className="flex h-10 items-center bg-[#0d1117]">
          <div className="w-[53px] text-center leading-[18px] whitespace-nowrap">
            <div>19:53</div>
            <div className="-mx-2">20/04/2017</div>
          </div>
          <button type="button" aria-label="1 new notification" className="ml-[18px] flex w-9 items-center">
            <svg viewBox="0 0 26 26" className="size-[26px]" aria-hidden="true">
              <path d="M1 2h16v13H8l-4 4v-4H1z" fill="#fff" />
              <path d="M4 5.500h10M4 8.500h10M4 11.500h10" stroke="#222" />
              <circle cx="17" cy="17" r="8" fill="#3a3d40" stroke="#888" />
              <text x="17" y="21" textAnchor="middle" fontFamily="Open Sans" fontSize="11" fill="#fff">
                1
              </text>
            </svg>
          </button>
          <span className="h-10 w-[5px] border-l border-[#777]" />
        </div>
      </div>
    </footer>
  );
}

export default function App() {
  return (
    <div className="flex h-screen flex-col overflow-hidden font-['Open_Sans',sans-serif]">
      <TabStrip />
      <AddressBar />
      <div className="flex min-h-0 flex-1">
        <div className="flex min-w-0 flex-1 flex-col">
          <AdminBar />
          <div className="flex min-h-0 flex-1">
            <Sidebar />
            <Content />
          </div>
        </div>
        <Scrollbar />
      </div>
      <Taskbar />
    </div>
  );
}
